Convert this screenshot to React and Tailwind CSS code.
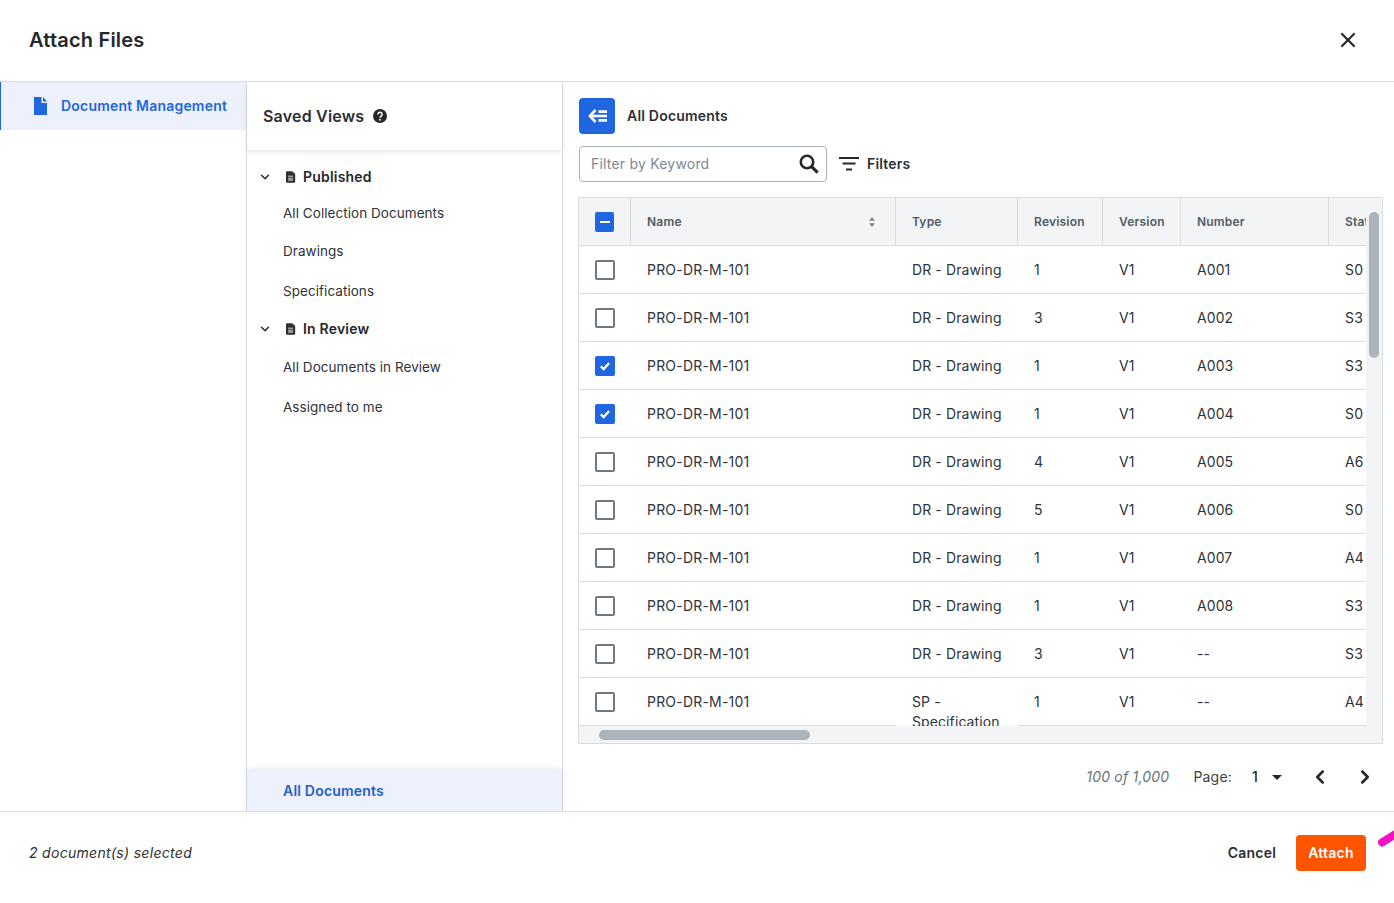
import { ChevronDown, ChevronLeft, ChevronRight, X } from 'lucide-react';

const rows = [
  { rev: '1', num: 'A001', status: 'S0' },
  { rev: '3', num: 'A002', status: 'S3' },
  { rev: '1', num: 'A003', status: 'S3', checked: true },
  { rev: '1', num: 'A004', status: 'S0', checked: true },
  { rev: '4', num: 'A005', status: 'A6' },
  { rev: '5', num: 'A006', status: 'S0' },
  { rev: '1', num: 'A007', status: 'A4' },
  { rev: '1', num: 'A008', status: 'S3' },
  { rev: '3', num: '--', status: 'S3' },
  { rev: '1', num: '--', status: 'A4', type: 'SP - Specification', last: true },
];

const DocIcon = ({ className }) => (
  <svg viewBox="0 0 12 14" className={className} fill="currentColor">
    <path d="M1 0h6.5L11 3.5V13a1 1 0 0 1-1 1H1a1 1 0 0 1-1-1V1a1 1 0 0 1 1-1z" />
    <path d="M2.5 5.5h6v1h-6zM2.5 7.8h6v1h-6zM2.5 10.1h6v1h-6z" fill="#fff" />
  </svg>
);

const Checkbox = ({ checked, partial }) => {
  if (checked || partial) {
    return (
      <div className="w-5 h-5 rounded-[2px] bg-[#1f66e0] flex items-center justify-center">
        {partial ? (
          <div className="w-[10px] h-[2px] bg-white" />
        ) : (
          <svg viewBox="0 0 12 12" className="w-3 h-3" fill="none" stroke="#fff" strokeWidth="2.2">
            <path d="M1.8 6.4l2.9 2.7 5.4-6" />
          </svg>
        )}
      </div>
    );
  }
  return <div className="w-5 h-5 rounded-[2px] border-2 border-[#6c7a85] bg-white" />;
};

const ViewItem = ({ label, className }) => (
  <div className={`pl-5 text-[13.5px] tracking-[0.05px] text-[#2e3338] ${className}`}>{label}</div>
);

const ViewGroup = ({ label, className }) => (
  <div className={`flex items-center text-sm font-semibold text-[#24282c] ${className}`}>
    <ChevronDown size={14} strokeWidth={2.5} className="ml-[-5px] w-[14px]" />
    <DocIcon className="w-[10px] h-3 ml-[14px] mr-[7px] text-[#2b2f33]" />
    {label}
  </div>
);

const HeadCell = ({ className, children }) => (
  <div className={`h-full shrink-0 flex items-center px-4 border-r border-[#d8dde1] text-xs font-semibold text-[#4f5b64] ${className}`}>
    {children}
  </div>
);

const Cell = ({ className, children }) => (
  <div className={`h-full shrink-0 flex items-center px-4 text-sm text-[#2e3338] ${className}`}>{children}</div>
);

export default function App() {
  return (
    <div className="relative w-[1394px] h-[903px] overflow-hidden bg-white font-['Inter',sans-serif] tracking-[0.2px] text-[#24282c]">
      <header className="h-[82px] flex items-center justify-between pl-[29px] pr-[34px] border-b border-[#d8dde1]">
        <h1 className="text-xl font-semibold leading-none mt-[-2px]">Attach Files</h1>
        <X size={24} strokeWidth={2.2} className="mt-[-2px]" />
      </header>

      <div className="flex h-[730px] border-b border-[#d8dde1]">
        <aside className="w-[247px] shrink-0 border-r border-[#d8dde1]">
          <div className="h-12 flex items-center gap-[14px] pl-[33px] bg-[#ecf1fb] border-l border-[#1f66e0] text-sm font-semibold text-[#1f66e0]">
            <svg viewBox="0 0 13 18" className="w-[13px] h-[18px] mt-[-1px]" fill="currentColor">
              <path d="M0 0h7.5v6H13v12H0z" />
              <path d="M9 0l4 4.5H9z" />
            </svg>
            Document Management
          </div>
        </aside>

        <section className="w-[316px] shrink-0 flex flex-col border-r border-[#d8dde1]">
          <div className="h-[68px] shrink-0 flex items-center gap-[9px] pl-4 shadow-[0_2px_6px_rgba(0,0,0,0.1)] text-base font-semibold text-[#2b2f33]">
            Saved Views
            <svg viewBox="0 0 14 14" className="w-[14px] h-[14px]">
              <circle cx="7" cy="7" r="7" fill="#24282c" />
              <path d="M4.9 5.4a2.1 2.1 0 1 1 3.3 1.7c-.8.5-1.2.9-1.2 1.6" fill="none" stroke="#fff" strokeWidth="1.5" />
              <circle cx="7" cy="10.7" r="0.95" fill="#fff" />
            </svg>
          </div>
          <div className="flex-1 pl-[16px] pt-[17px]">
            <ViewGroup label="Published" className="h-5" />
            <ViewItem label="All Collection Documents" className="mt-4 leading-5" />
            <ViewItem label="Drawings" className="mt-[18px] leading-5" />
            <ViewItem label="Specifications" className="mt-5 leading-5" />
            <ViewGroup label="In Review" className="h-5 mt-[18px]" />
            <ViewItem label="All Documents in Review" className="mt-[18px] leading-5" />
            <ViewItem label="Assigned to me" className="mt-5 leading-5" />
          </div>
          <div className="h-[41px] shrink-0 flex items-center pl-9 bg-[#ecf1fb] shadow-[0_-2px_6px_rgba(0,0,0,0.08)] text-sm font-semibold text-[#1f5fd0]">
            All Documents
          </div>
        </section>

        <main className="flex-1 min-w-0 pl-[15px] pr-[11px] pt-4">
          <div className="flex items-center gap-3 h-9 pl-px">
            <div className="w-9 h-9 rounded bg-[#1f66e0] flex items-center justify-center">
              <svg viewBox="0 0 19 14" className="w-[19px] h-[14px]" fill="none" stroke="#fff" strokeWidth="2.6">
                <path d="M7.5 1L2 7l5.5 6M3 7h16M10.5 2.6H19M10.5 11.4H19" />
              </svg>
            </div>
            <span className="text-sm font-semibold text-[#2b2f33]">All Documents</span>
          </div>

          <div className="flex items-center mt-3 pl-px">
            <div className="w-[248px] h-9 rounded border border-[#a9b3ba] flex items-center justify-between pl-[11px] pr-[7px]">
              <span className="text-sm text-[#7b8891]">Filter by Keyword</span>
              <svg viewBox="0 0 20 20" className="w-5 h-5" fill="none" stroke="#24282c" strokeWidth="2.6">
                <circle cx="8" cy="8" r="6.2" />
                <path d="M12.6 12.6l6 6" strokeWidth="3" />
              </svg>
            </div>
            <svg viewBox="0 0 20 14" className="w-5 h-[14px] ml-[12px] mr-[8px]" fill="#24282c">
              <path d="M0 0h20v2H0zM3.5 5.5h13v2h-13zM7 11.5h6v2H7z" />
            </svg>
            <span className="text-sm font-semibold text-[#2b2f33]">Filters</span>
          </div>

          <div className="relative mt-[15px] w-[805px] h-[547px] border border-[#d8dde1] overflow-hidden">
            <div className="flex h-[48px] w-[900px] bg-[#f3f4f6] border-b border-[#d8dde1]">
              <HeadCell className="w-[52px] px-0 justify-center">
                <Checkbox partial />
              </HeadCell>
              <HeadCell className="w-[265px] justify-between">
                Name
                <svg viewBox="0 0 8 10" className="w-2 h-[10px] mr-[3px]" fill="#7b8891">
                  <path d="M4 0l3 3.8H1zM4 10L1 6.2h6z" />
                </svg>
              </HeadCell>
              <HeadCell className="w-[122px]">Type</HeadCell>
              <HeadCell className="w-[85px]">Revision</HeadCell>
              <HeadCell className="w-[78px]">Version</HeadCell>
              <HeadCell className="w-[148px]">Number</HeadCell>
              <HeadCell className="w-[150px] border-r-0">Status</HeadCell>
            </div>

            {rows.map((row, i) => (
              <div key={i} className={`flex w-[900px] h-12 ${row.last ? '' : 'border-b border-[#d8dde1]'}`}>
                <Cell className={`w-[52px] px-0 justify-center ${row.last ? 'border-b border-[#d8dde1]' : ''}`}>
                  <Checkbox checked={row.checked} />
                </Cell>
                <Cell className={`w-[265px] ${row.last ? 'border-b border-[#d8dde1]' : ''}`}>PRO-DR-M-101</Cell>
                {row.last ? (
                  <div className="w-[122px] shrink-0 px-4 pt-[14px] text-sm leading-5 tracking-[0.1px] text-[#2e3338]">{row.type}</div>
                ) : (
                  <Cell className="w-[122px] whitespace-nowrap tracking-[0.1px]">DR - Drawing</Cell>
                )}
                <Cell className={`w-[85px] ${row.last ? 'border-b border-[#d8dde1]' : ''}`}>{row.rev}</Cell>
                <Cell className={`w-[78px] ${row.last ? 'border-b border-[#d8dde1]' : ''}`}>V1</Cell>
                <Cell className={`w-[148px] tracking-[0.1px] ${row.last ? 'border-b border-[#d8dde1]' : ''}`}>{row.num}</Cell>
                <Cell className={`w-[150px] ${row.last ? 'border-b border-[#d8dde1]' : ''}`}>{row.status}</Cell>
              </div>
            ))}

            {/* scrollbars sit over the table */}
            <div className="absolute right-0 top-0 bottom-0 w-[16px] bg-[#f3f4f6]" />
            <div className="absolute right-[3px] top-[14px] w-[10px] h-[146px] rounded-[5px] bg-[#abb4ba]" />
            <div className="absolute left-0 right-0 bottom-0 h-[17px] bg-[#f3f4f6]" />
            <div className="absolute left-[20px] bottom-[3px] w-[211px] h-[10px] rounded-[5px] bg-[#abb4ba]" />
          </div>

          <div className="flex items-center justify-end h-[66px] text-sm pr-[10px]">
            <span className="italic text-[#66727b]">100 of 1,000</span>
            <span className="ml-6 text-[#3a4046]">Page:</span>
            <span className="ml-5 font-medium">1</span>
            <svg viewBox="0 0 10 5" className="w-[10px] h-[5px] ml-[14px] mr-[27px]" fill="#24282c">
              <path d="M0 0h10L5 5z" />
            </svg>
            <ChevronLeft size={22} strokeWidth={2.8} />
            <ChevronRight size={22} strokeWidth={2.8} className="ml-[23px] mr-[-3px]" />
          </div>
        </main>
      </div>

      <footer className="h-[82px] flex items-center justify-between pl-[29px] pr-[28px]">
        <span className="text-sm italic tracking-[0.3px] text-[#2b2f33]">2 document(s) selected</span>
        <div className="flex items-center gap-5">
          <span className="text-sm font-semibold text-[#2b2f33]">Cancel</span>
          <button className="w-[70px] h-9 rounded bg-[#ff5500] text-sm font-semibold text-white">Attach</button>
        </div>
      </footer>

      {/* pink annotation stroke running off the edge */}
      <svg viewBox="0 0 16 18" className="absolute left-[1378px] top-[829px] w-4 h-[18px]" fill="none" stroke="#f012c4" strokeWidth="8" strokeLinecap="round">
        <path d="M4 13.5L24 1" />
      </svg>
    </div>
  );
}
